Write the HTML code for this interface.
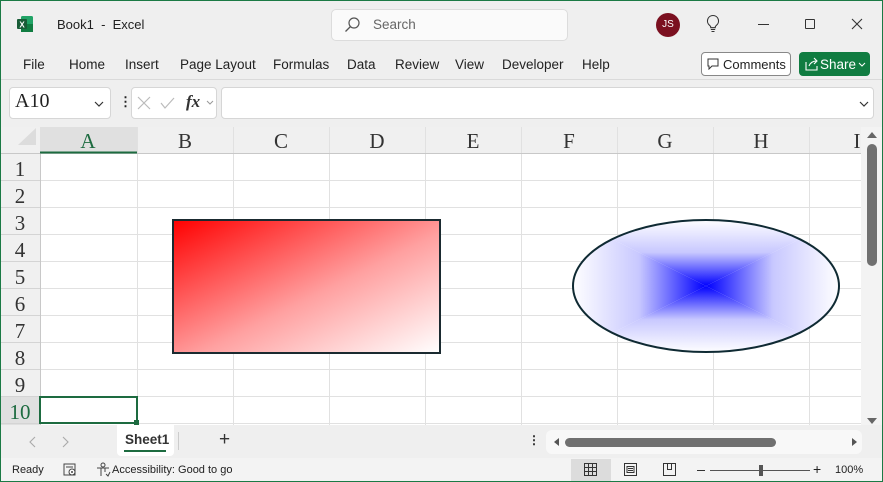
<!DOCTYPE html>
<html><head><style>
*{margin:0;padding:0;box-sizing:border-box}
body{width:883px;height:482px;overflow:hidden;background:#efefef;font-family:"Liberation Sans",sans-serif;font-size:13px;color:#222;position:relative}
.a{position:absolute}
.t{position:absolute;white-space:nowrap}
.m{font-size:13.5px}
.serif{font-family:"Liberation Serif",serif}
</style></head><body>
<div class="a" style="left:0;top:0;width:883px;height:482px;border:1px solid #1b7a45;z-index:50;pointer-events:none"></div>
<svg class="a" style="left:16px;top:15px" width="18" height="18" viewBox="0 0 18 18"><rect x="5" y="1" width="12" height="16" rx="1.5" fill="#21a366"/><rect x="5" y="9" width="12" height="8" fill="#107c41"/><rect x="1" y="4" width="10" height="10" rx="1" fill="#185c37"/><text x="6" y="12.5" font-size="8" fill="#fff" text-anchor="middle" font-family="Liberation Sans" font-weight="bold">X</text></svg>
<div class="t" style="left:57px;top:17px;font-size:13px">Book1 &nbsp;- &nbsp;Excel</div>
<div class="a" style="left:331px;top:9px;width:237px;height:32px;background:#fafafa;border:1px solid #dcdcdc;border-radius:5px"></div>
<svg class="a" style="left:344px;top:17px" width="16" height="16"><circle cx="10" cy="6" r="5" fill="none" stroke="#555" stroke-width="1.2"/><line x1="6.5" y1="9.5" x2="1.5" y2="14.5" stroke="#555" stroke-width="1.3"/></svg>
<div class="t" style="left:373px;top:17px;color:#666;font-size:13.5px">Search</div>
<div class="a" style="left:656px;top:13px;width:24px;height:24px;border-radius:50%;background:#7b1020;color:#fff;font-size:10px;text-align:center;line-height:24px">JS</div>
<svg class="a" style="left:705px;top:14px" width="16" height="20"><path d="M8 1.5a5.5 5.5 0 0 0-3.2 10c.7.6 1 1.3 1 2.2h4.4c0-.9.3-1.6 1-2.2A5.5 5.5 0 0 0 8 1.5z" fill="none" stroke="#333" stroke-width="1.1"/><line x1="5.8" y1="15.5" x2="10.2" y2="15.5" stroke="#333"/><line x1="6.5" y1="17.5" x2="9.5" y2="17.5" stroke="#333"/></svg>
<div class="a" style="left:758px;top:24px;width:11px;height:1px;background:#333"></div>
<div class="a" style="left:805px;top:19px;width:10px;height:10px;border:1px solid #333;border-radius:1px"></div>
<svg class="a" style="left:851px;top:18px" width="12" height="12"><path d="M1 1L11 11M11 1L1 11" stroke="#333" stroke-width="1.1"/></svg>
<div class="t m" style="left:23px;top:57px">File</div>
<div class="t m" style="left:69px;top:57px">Home</div>
<div class="t m" style="left:125px;top:57px">Insert</div>
<div class="t m" style="left:180px;top:57px">Page Layout</div>
<div class="t m" style="left:273px;top:57px">Formulas</div>
<div class="t m" style="left:347px;top:57px">Data</div>
<div class="t m" style="left:395px;top:57px">Review</div>
<div class="t m" style="left:455px;top:57px">View</div>
<div class="t m" style="left:502px;top:57px">Developer</div>
<div class="t m" style="left:582px;top:57px">Help</div>
<div class="a" style="left:701px;top:52px;width:90px;height:24px;border:1px solid #888;border-radius:4px;background:#fff"></div>
<svg class="a" style="left:707px;top:58px" width="12" height="12"><path d="M1 1h10v7H5l-3 3V8H1z" fill="none" stroke="#333"/></svg>
<div class="t" style="left:723px;top:57px">Comments</div>
<div class="a" style="left:799px;top:52px;width:71px;height:24px;border-radius:4px;background:#107c41"></div>
<svg class="a" style="left:805px;top:57px" width="14" height="14"><path d="M1 5v8h11v-4M4 9c1-3 4-5 7-5M9 1l3 3-3 3" fill="none" stroke="#fff" stroke-width="1.1"/></svg>
<div class="t m" style="left:820px;top:57px;color:#fff">Share</div>
<svg class="a" style="left:858px;top:62px" width="8" height="5"><path d="M1 1l3 3 3-3" fill="none" stroke="#fff"/></svg>
<div class="a" style="left:0;top:79px;width:883px;height:1px;background:#dadada"></div>
<div class="a" style="left:9px;top:87px;width:102px;height:32px;background:#fff;border:1px solid #d6d6d6;border-radius:4px"></div>
<div class="t serif" style="left:15px;top:90px;font-size:20px">A10</div>
<svg class="a" style="left:94px;top:101px" width="10" height="6"><path d="M1 1l4 4 4-4" fill="none" stroke="#333" stroke-width="1.2"/></svg>
<div class="t" style="left:119px;top:94px;font-weight:bold;font-size:13px">⋮</div>
<div class="a" style="left:131px;top:87px;width:86px;height:32px;background:#fff;border:1px solid #d6d6d6;border-radius:4px"></div>
<svg class="a" style="left:137px;top:96px" width="80" height="14"><path d="M1 1l12 12M13 1L1 13" stroke="#bbb" stroke-width="1.2"/><path d="M24 7l4 5 9-10" fill="none" stroke="#bbb" stroke-width="1.2"/><path d="M70 5l3 3 3-3" fill="none" stroke="#999"/></svg>
<div class="t serif" style="left:186px;top:92px;font-size:17px;font-style:italic;font-weight:bold;color:#333">fx</div>
<div class="a" style="left:221px;top:87px;width:653px;height:32px;background:#fff;border:1px solid #d6d6d6;border-radius:4px"></div>
<svg class="a" style="left:859px;top:101px" width="10" height="6"><path d="M1 1l4 4 4-4" fill="none" stroke="#333" stroke-width="1.2"/></svg>
<svg class="a" style="left:0;top:127px" width="861" height="298">
<rect x="0" y="0" width="861" height="298" fill="#fff"/>
<rect x="0" y="0" width="861" height="26" fill="#f0f0f0"/>
<rect x="0" y="0" width="40" height="298" fill="#f0f0f0"/>
<rect x="40" y="0" width="97" height="26" fill="#e0e0e0"/>
<rect x="0" y="270" width="40" height="28" fill="#e0e0e0"/>
<path d="M18 18L36 1V18Z" fill="#dcdcdc"/>
<g stroke="#e1e1e1" stroke-width="1">
<path d="M137.5 0V298M233.5 0V298M329.5 0V298M425.5 0V298M521.5 0V298M617.5 0V298M713.5 0V298M809.5 0V298"/>
<path d="M40 53.5H861M40 80.5H861M40 107.5H861M40 134.5H861M40 161.5H861M40 188.5H861M40 215.5H861M40 242.5H861M40 269.5H861M40 296.5H861"/>
<path d="M0 53.5H40M0 80.5H40M0 107.5H40M0 134.5H40M0 161.5H40M0 188.5H40M0 215.5H40M0 242.5H40M0 269.5H40M0 296.5H40" stroke="#d4d4d4"/>
</g>
<line x1="0" y1="26.5" x2="861" y2="26.5" stroke="#c8c8c8"/>
<line x1="40.5" y1="26" x2="40.5" y2="298" stroke="#c8c8c8"/>
<line x1="40" y1="25.5" x2="137" y2="25.5" stroke="#1d6b40" stroke-width="2"/>
<g font-family="Liberation Serif" font-size="21" fill="#333" text-anchor="middle">
<text x="88" y="21" fill="#1d6b40">A</text><text x="185" y="21">B</text><text x="281" y="21">C</text><text x="377" y="21">D</text><text x="473" y="21">E</text><text x="569" y="21">F</text><text x="665" y="21">G</text><text x="761" y="21">H</text><text x="857" y="21">I</text>
<text x="20" y="49">1</text><text x="20" y="76">2</text><text x="20" y="103">3</text><text x="20" y="130">4</text><text x="20" y="157">5</text><text x="20" y="184">6</text><text x="20" y="211">7</text><text x="20" y="238">8</text><text x="20" y="265">9</text><text x="20" y="292" fill="#1d6b40">10</text>
</g>
<rect x="40" y="270" width="97" height="26" fill="none" stroke="#1d6b40" stroke-width="2"/>
<rect x="134" y="293" width="5" height="5" fill="#1d6b40"/>
<defs>
<linearGradient id="r" x1="0" y1="0" x2="1" y2="1"><stop offset="0" stop-color="#f00"/><stop offset="0.55" stop-color="#ffa0a0"/><stop offset="1" stop-color="#fff"/></linearGradient>
<linearGradient id="gt" x1="0" y1="0" x2="0" y2="1"><stop offset="0" stop-color="#fff"/><stop offset="0.5" stop-color="#c8c8ff"/><stop offset="1" stop-color="#00f"/></linearGradient>
<linearGradient id="gb" x1="0" y1="1" x2="0" y2="0"><stop offset="0" stop-color="#fff"/><stop offset="0.5" stop-color="#c8c8ff"/><stop offset="1" stop-color="#00f"/></linearGradient>
<linearGradient id="gl" x1="0" y1="0" x2="1" y2="0"><stop offset="0" stop-color="#fff"/><stop offset="0.5" stop-color="#c8c8ff"/><stop offset="1" stop-color="#00f"/></linearGradient>
<linearGradient id="gr" x1="1" y1="0" x2="0" y2="0"><stop offset="0" stop-color="#fff"/><stop offset="0.5" stop-color="#c8c8ff"/><stop offset="1" stop-color="#00f"/></linearGradient>
<clipPath id="ec"><ellipse cx="706" cy="159" rx="133" ry="66"/></clipPath>
</defs>
<rect x="173" y="93" width="267" height="133" fill="url(#r)" stroke="#1a2a30" stroke-width="2"/>
<g clip-path="url(#ec)">
<polygon points="572,92 840,92 706,159" fill="url(#gt)"/>
<polygon points="572,226 840,226 706,159" fill="url(#gb)"/>
<polygon points="572,92 572,226 706,159" fill="url(#gl)"/>
<polygon points="840,92 840,226 706,159" fill="url(#gr)"/>
</g>
<ellipse cx="706" cy="159" rx="133" ry="66" fill="none" stroke="#0f2a33" stroke-width="2"/>
</svg>
<div class="a" style="left:861px;top:127px;width:22px;height:298px;background:#f3f3f3"></div>
<svg class="a" style="left:866px;top:131px" width="12" height="8"><path d="M1 7L6 1l5 6z" fill="#666"/></svg>
<div class="a" style="left:867px;top:144px;width:10px;height:122px;border-radius:5px;background:#707070"></div>
<svg class="a" style="left:866px;top:417px" width="12" height="8"><path d="M1 1L6 7l5-6z" fill="#666"/></svg>
<svg class="a" style="left:28px;top:436px" width="45" height="12"><path d="M7 1L2 6l5 5M35 1l5 5-5 5" fill="none" stroke="#aaa" stroke-width="1.1"/></svg>
<div class="a" style="left:117px;top:425px;width:57px;height:31px;background:#fff;border-radius:0 0 4px 4px"></div>
<div class="t" style="left:125px;top:432px;font-weight:bold;font-size:13.5px;color:#333">Sheet1</div>
<div class="a" style="left:124px;top:450px;width:42px;height:2px;background:#1d6b40"></div>
<div class="a" style="left:178px;top:432px;width:1px;height:18px;background:#ccc"></div>
<div class="t" style="left:219px;top:429px;font-size:19px;color:#333">+</div>
<div class="t" style="left:528px;top:433px;font-weight:bold;font-size:12px">⋮</div>
<div class="a" style="left:546px;top:430px;width:316px;height:24px;background:#f8f8f8;border-radius:6px"></div>
<svg class="a" style="left:552px;top:437px" width="8" height="10"><path d="M7 1L2 5l5 4z" fill="#555"/></svg>
<div class="a" style="left:565px;top:438px;width:211px;height:9px;border-radius:5px;background:#707070"></div>
<svg class="a" style="left:851px;top:437px" width="8" height="10"><path d="M1 1l5 4-5 4z" fill="#555"/></svg>
<div class="a" style="left:0;top:458px;width:883px;height:24px;background:#f3f3f3"></div>
<div class="t" style="left:12px;top:464px;font-size:11px">Ready</div>
<svg class="a" style="left:63px;top:463px" width="14" height="14"><rect x="1" y="1" width="11" height="11" fill="none" stroke="#444"/><line x1="3" y1="4" x2="10" y2="4" stroke="#444"/><circle cx="9" cy="9" r="3" fill="#fff" stroke="#444"/><circle cx="9" cy="9" r="1" fill="#444"/></svg>
<svg class="a" style="left:95px;top:462px" width="16" height="16"><circle cx="8" cy="3" r="2" fill="none" stroke="#444"/><path d="M2 6h12M6 6v8M10 6v4M11 12l2 2 2-4" fill="none" stroke="#444"/></svg>
<div class="t" style="left:112px;top:464px;font-size:11px">Accessibility: Good to go</div>
<div class="a" style="left:571px;top:459px;width:40px;height:22px;background:#dcdcdc"></div>
<svg class="a" style="left:584px;top:463px" width="13" height="13"><path d="M.5 .5h12v12H.5zM4.5 .5v12M8.5 .5v12M.5 4.5h12M.5 8.5h12" fill="none" stroke="#333"/></svg>
<svg class="a" style="left:624px;top:463px" width="13" height="13"><path d="M.5 .5h12v12H.5zM3 3.5h7v6H3zM4 5.5h5M4 7.5h5" fill="none" stroke="#333"/></svg>
<svg class="a" style="left:663px;top:463px" width="14" height="13"><path d="M.5 .5h12v12H.5zM4.5 .5v6h4v-6" fill="none" stroke="#333"/></svg>
<div class="a" style="left:697px;top:470px;width:8px;height:1px;background:#333"></div>
<div class="a" style="left:710px;top:470px;width:100px;height:1px;background:#555"></div>
<div class="a" style="left:759px;top:465px;width:4px;height:11px;background:#555"></div>
<div class="t" style="left:813px;top:461px;font-size:14px">+</div>
<div class="t" style="left:835px;top:464px;font-size:11px">100%</div>
</body></html>
